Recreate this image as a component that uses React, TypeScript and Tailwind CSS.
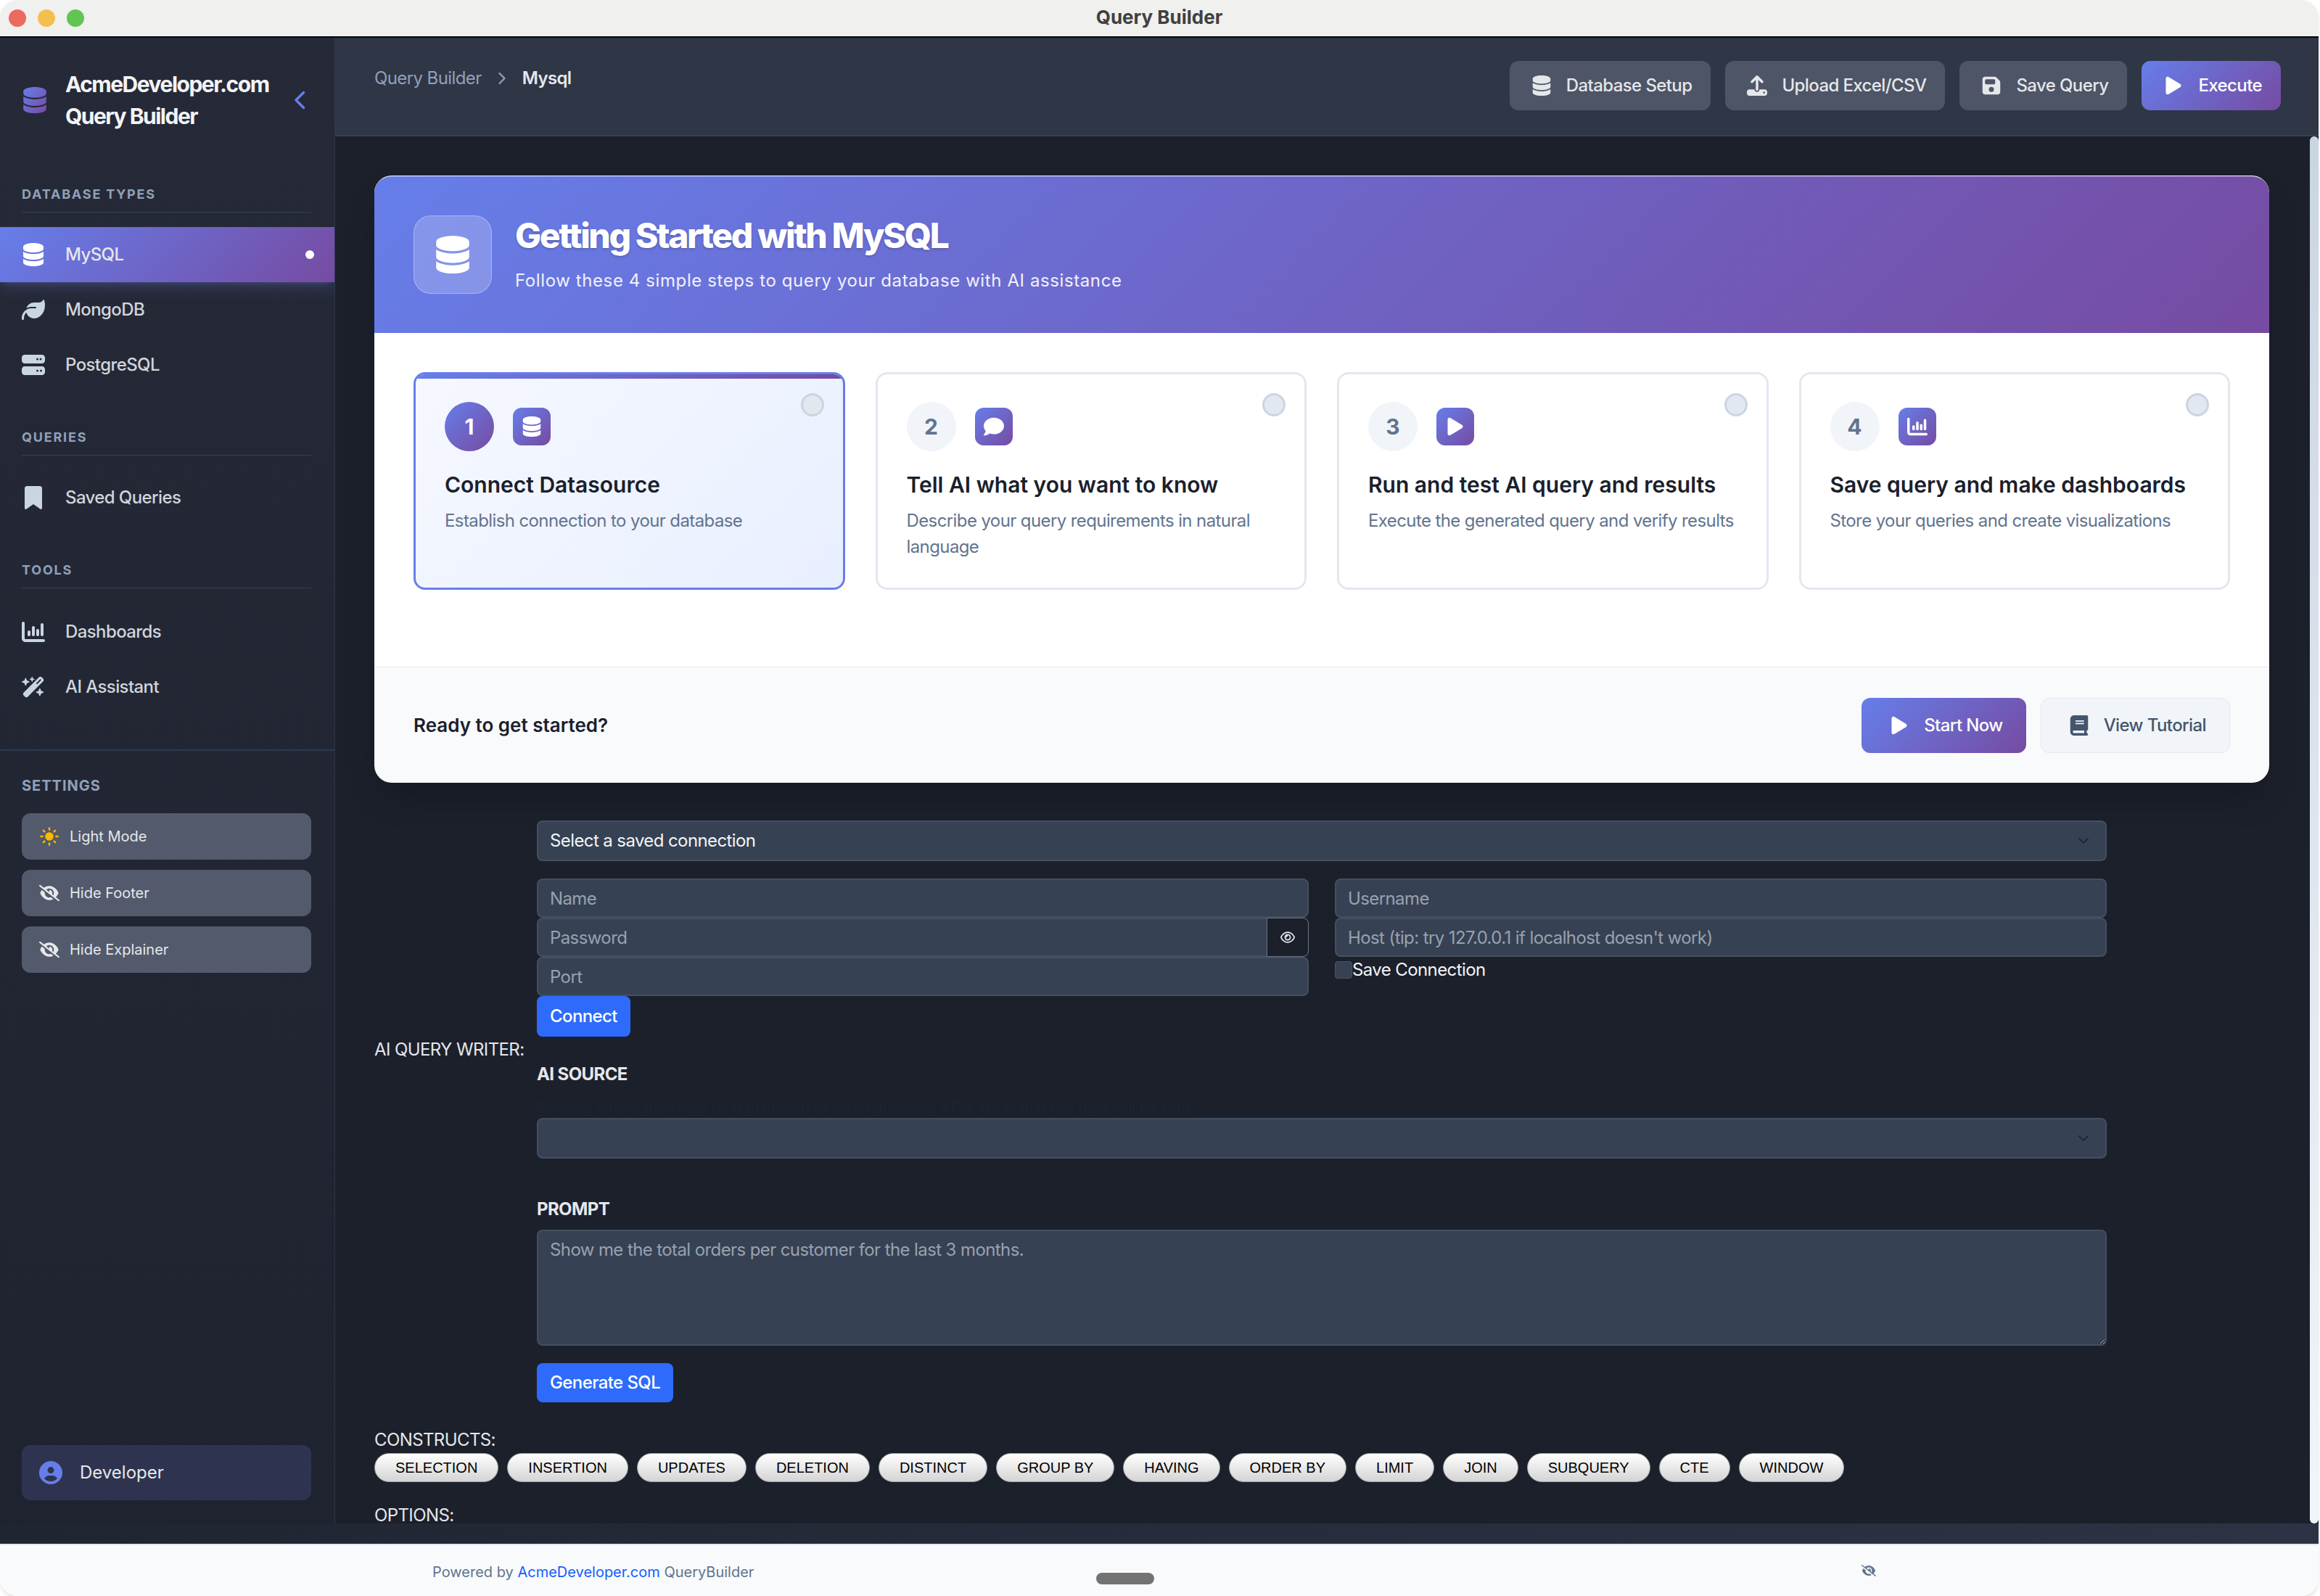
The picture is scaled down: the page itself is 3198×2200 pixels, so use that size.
import React from 'react';
import { ChevronDown, ChevronRight, Sun } from 'lucide-react';
import {
  FaBook,
  FaBookmark,
  FaChartColumn,
  FaChevronLeft,
  FaCircleUser,
  FaComment,
  FaDatabase,
  FaEyeSlash,
  FaFloppyDisk,
  FaLeaf,
  FaPlay,
  FaRegEye,
  FaServer,
  FaUpload,
  FaWandMagicSparkles,
} from 'react-icons/fa6';

const brand = 'bg-linear-135/srgb from-[#667eea] to-[#764ba2]';
const textMd = 'text-2xl tracking-tight';
const fieldClass = `h-13.5 w-full rounded-lg border-2 border-gray-600/70 bg-gray-700 px-4 ${textMd} text-gray-100 placeholder-gray-400 outline-none`;
const blueButton = `w-fit rounded-lg bg-[#2f6bfa] px-4.5 ${textMd} font-medium text-white`;
const labelClass = `${textMd} leading-7 text-gray-200`;

const databases = [
  { name: 'MySQL', icon: FaDatabase, active: true },
  { name: 'MongoDB', icon: FaLeaf },
  { name: 'PostgreSQL', icon: FaServer },
];

const steps = [
  { title: 'Connect Datasource', text: 'Establish connection to your database', icon: FaDatabase },
  { title: 'Tell AI what you want to know', text: 'Describe your query requirements in natural language', icon: FaComment },
  { title: 'Run and test AI query and results', text: 'Execute the generated query and verify results', icon: FaPlay },
  { title: 'Save query and make dashboards', text: 'Store your queries and create visualizations', icon: FaChartColumn },
];

const constructs = [
  'SELECTION',
  'INSERTION',
  'UPDATES',
  'DELETION',
  'DISTINCT',
  'GROUP BY',
  'HAVING',
  'ORDER BY',
  'LIMIT',
  'JOIN',
  'SUBQUERY',
  'CTE',
  'WINDOW',
];

const NavItem: React.FC<{
  name: string;
  icon: React.ElementType;
  active?: boolean;
}> = ({ name, icon: Icon, active }) => (
  <div
    className={`flex h-19 items-center gap-7 pl-7.5 pr-7 ${textMd} font-medium ${
      active ? `${brand} text-gray-200 shadow-lg shadow-indigo-400/20` : 'text-gray-300'
    }`}
  >
    <Icon className={active ? 'size-8 text-white' : 'size-8 text-slate-300'} />
    <span className="flex-1">{name}</span>
    {active && <span className="size-3 rounded-full bg-white" />}
  </div>
);

const SideLabel: React.FC<{ children: React.ReactNode }> = ({ children }) => (
  <div className="ml-7.5 mr-8 border-b border-slate-700 pb-2.5 text-lg leading-7 font-bold tracking-widest text-slate-400 uppercase">
    {children}
  </div>
);

const SettingButton: React.FC<{ label: string; icon: React.ReactNode }> = ({ label, icon }) => (
  <button className="flex h-16 items-center gap-3.5 rounded-xl bg-[#535a6b] pl-6 text-xl text-gray-200">
    {icon}
    {label}
  </button>
);

const Sidebar = () => (
  <aside className="flex w-[462px] shrink-0 flex-col border-r border-slate-700/60 bg-linear-to-b from-[#262a38] to-[#1f2330]">
    <div className="flex items-center pt-10.5 pl-7.5 pr-8">
      <FaDatabase className="mr-6 size-9 shrink-0" fill="url(#brandFill)" />
      <div className="flex-1 text-3xl leading-11 font-bold tracking-tighter text-gray-100">
        AcmeDeveloper.com
        <br />
        Query Builder
      </div>
      <FaChevronLeft className="size-7 text-[#667eea]" />
    </div>

    <div className="mt-18">
      <SideLabel>Database Types</SideLabel>
    </div>
    <div className="mt-5">
      {databases.map((db) => (
        <NavItem key={db.name} {...db} />
      ))}
    </div>

    <div className="mt-12">
      <SideLabel>Queries</SideLabel>
    </div>
    <div className="mt-5">
      <NavItem name="Saved Queries" icon={FaBookmark} />
    </div>

    <div className="mt-12">
      <SideLabel>Tools</SideLabel>
    </div>
    <div className="mt-5.5">
      <NavItem name="Dashboards" icon={FaChartColumn} />
      <NavItem name="AI Assistant" icon={FaWandMagicSparkles} />
    </div>

    <div className="mt-12 border-t-2 border-slate-700/70 pt-8.5 pl-7.5 pr-8">
      <div className="mb-6 text-xl leading-7 font-bold tracking-wider text-slate-400 uppercase">Settings</div>
      <div className="flex flex-col gap-3.5">
        <SettingButton
          label="Light Mode"
          icon={<Sun className="size-7 fill-amber-400 text-amber-400" />}
        />
        <SettingButton label="Hide Footer" icon={<FaEyeSlash className="size-7" />} />
        <SettingButton label="Hide Explainer" icon={<FaEyeSlash className="size-7" />} />
      </div>
    </div>

    <div className="mt-auto mb-8 ml-7.5 mr-8 flex h-19 items-center gap-6 rounded-xl bg-[#2e3450] pl-6 text-2xl text-gray-200">
      <FaCircleUser className="size-8 text-[#667eea]" />
      Developer
    </div>
  </aside>
);

const HeaderButton: React.FC<{
  label: string;
  icon: React.ElementType;
  primary?: boolean;
}> = ({ label, icon: Icon, primary }) => (
  <button
    className={`flex h-17 items-center gap-5 rounded-xl pl-7.5 pr-6.5 ${textMd} font-medium ${
      primary ? `${brand} text-white` : 'bg-[#4d5566] text-gray-200'
    }`}
  >
    <Icon className="size-7" />
    {label}
  </button>
);

const Header = () => (
  <header className="flex h-34 shrink-0 items-start justify-between border-b-2 border-slate-700 bg-[#2f3646] pt-8 pr-13 pl-13.5">
    <div className={`mt-2 flex items-center gap-3.5 ${textMd} leading-8`}>
      <span className="text-slate-400">Query Builder</span>
      <ChevronRight className="size-7 text-slate-400" />
      <span className="font-semibold text-gray-200">Mysql</span>
    </div>
    <div className="flex gap-5">
      <HeaderButton label="Database Setup" icon={FaDatabase} />
      <HeaderButton label="Upload Excel/CSV" icon={FaUpload} />
      <HeaderButton label="Save Query" icon={FaFloppyDisk} />
      <HeaderButton label="Execute" icon={FaPlay} primary />
    </div>
  </header>
);

const StepCard: React.FC<{
  index: number;
  title: string;
  text: string;
  icon: React.ElementType;
}> = ({ index, title, text, icon: Icon }) => {
  const active = index === 1;
  return (
    <div
      className={`relative h-75 overflow-hidden rounded-2xl border-3 px-10 pt-9.5 ${
        active ? 'border-[#667eea] bg-linear-135/srgb from-[#f6f8ff] to-[#e8efff]' : 'border-slate-200 bg-white'
      }`}
    >
      {active && <div className={`absolute inset-x-0 top-0 h-1.5 ${brand}`} />}
      <div className="absolute top-6.5 right-6.5 size-8 rounded-full border-3 border-slate-300 bg-slate-200" />
      <div className="flex items-center gap-6.5">
        <div
          className={`flex size-17 items-center justify-center rounded-full text-3xl font-bold ${
            active ? `${brand} text-white` : 'bg-slate-100 text-slate-500'
          }`}
        >
          {index}
        </div>
        <div className={`flex size-13 items-center justify-center rounded-xl text-white ${brand}`}>
          <Icon className="size-7" />
        </div>
      </div>
      <h3 className="mt-6.5 text-3xl leading-10 font-semibold text-[#1a202c]">{title}</h3>
      <p className={`mt-3 ${textMd} leading-9 text-slate-500`}>{text}</p>
    </div>
  );
};

const GettingStarted = () => (
  <section className="overflow-hidden rounded-3xl border-t border-white bg-[#f8fafc] shadow-2xl">
    <div className={`flex h-54 items-center gap-8 px-13.5 ${brand}`}>
      <div className="flex size-27 items-center justify-center rounded-3xl border border-white/30 bg-white/20">
        <FaDatabase className="size-13 text-white" />
      </div>
      <div>
        <h1 className="text-5xl leading-14 font-extrabold tracking-tighter text-white text-shadow-md">
          Getting Started with MySQL
        </h1>
        <p className="mt-4 text-2xl leading-9 tracking-wide text-white/90">
          Follow these 4 simple steps to query your database with AI assistance
        </p>
      </div>
    </div>

    <div className="grid grid-cols-4 gap-10.5 bg-white px-13.5 pt-13.5 pb-26.5">
      {steps.map((step, i) => (
        <StepCard key={step.title} index={i + 1} {...step} />
      ))}
    </div>

    <div className="flex h-40 items-center justify-between border-t border-slate-200 px-13.5">
      <span className="text-[26px] font-semibold text-[#1a202c]">Ready to get started?</span>
      <div className="flex gap-5">
        <button className={`flex h-19 items-center gap-5 rounded-xl pl-9.5 pr-8 ${textMd} font-medium text-white ${brand}`}>
          <FaPlay className="size-7" />
          Start Now
        </button>
        <button className={`flex h-19 items-center gap-5 rounded-xl border border-slate-200 bg-slate-100 pl-9.5 pr-8 ${textMd} font-medium text-slate-600`}>
          <FaBook className="size-7" />
          View Tutorial
        </button>
      </div>
    </div>
  </section>
);

const SelectField: React.FC<{ children?: React.ReactNode }> = ({ children }) => (
  <div className="relative">
    <select
      className={`h-14 w-full appearance-none rounded-lg border-2 border-gray-600/70 bg-gray-700 px-4 ${textMd} text-gray-100 outline-none`}
      defaultValue=""
    >
      {children}
    </select>
    <ChevronDown className="pointer-events-none absolute top-4 right-5 size-6 text-gray-800" />
  </div>
);

const ConnectionForm = () => (
  <div className="mt-13 px-56">
    <SelectField>
      <option value="">Select a saved connection</option>
    </SelectField>
    <div className="mt-6 grid grid-cols-2 gap-9">
      <div>
        <input className={fieldClass} placeholder="Name" />
        <div className="relative">
          <input className={fieldClass} placeholder="Password" />
          <button className="absolute inset-y-0 right-0 flex w-14.5 items-center justify-center rounded-r-lg border border-gray-500 bg-[#1c202b] text-gray-200">
            <FaRegEye className="size-5" />
          </button>
        </div>
        <input className={fieldClass} placeholder="Port" />
        <button className={`h-14 ${blueButton}`}>Connect</button>
      </div>
      <div>
        <input className={fieldClass} placeholder="Username" />
        <input className={fieldClass} placeholder="Host (tip: try 127.0.0.1 if localhost doesn't work)" />
        <label className={`flex h-9 items-center ${textMd} text-gray-100`}>
          <span className="size-6 rounded-sm border border-gray-600 bg-gray-700" />
          Save Connection
        </label>
      </div>
    </div>
  </div>
);

const QueryWriter = () => (
  <div className="flex">
    <div className={`mt-1 w-56 ${labelClass}`}>AI QUERY WRITER:</div>
    <div className="mr-56 flex-1">
      <div className={`mt-9.5 ${textMd} leading-7 font-bold text-gray-200`}>AI SOURCE</div>
      <p className="mt-4.5 text-xl leading-7 text-gray-800/50">
        Schema information may be transmitted to external openai APIs. No actual row data will be sent
      </p>
      <SelectField />
      <div className={`mt-14 ${textMd} leading-7 font-bold text-gray-200`}>PROMPT</div>
      <textarea
        className={`mt-3.5 block h-40 w-full rounded-lg border-2 border-gray-600/70 bg-gray-700 px-4 py-2.5 ${textMd} text-gray-100 placeholder-gray-400 outline-none`}
        placeholder="Show me the total orders per customer for the last 3 months."
      />
      <button className={`mt-6 h-13.5 ${blueButton}`}>Generate SQL</button>
    </div>
  </div>
);

const Constructs = () => (
  <div>
    <div className={`mt-9.5 ${labelClass}`}>CONSTRUCTS:</div>
    <div className="mt-1 flex gap-3">
      {constructs.map((item) => (
        <button
          key={item}
          className="h-10 rounded-full border border-neutral-400 bg-linear-to-b from-white to-neutral-300 px-7 font-['Liberation_Sans',Arial,sans-serif] text-xl text-black"
        >
          {item}
        </button>
      ))}
    </div>
    <div className={`mt-9 ${textMd} leading-5 text-gray-200`}>OPTIONS:</div>
  </div>
);

const App = () => (
  <div className="h-screen bg-white pr-0.5 font-['Inter','Liberation_Sans',sans-serif]">
    {/* gradient fill used by the sidebar logo */}
    <svg className="absolute size-0">
      <defs>
        <linearGradient id="brandFill" x1="0" y1="0" x2="1" y2="1">
          <stop offset="0" stopColor="#667eea" />
          <stop offset="1" stopColor="#764ba2" />
        </linearGradient>
      </defs>
    </svg>

    <div className="flex h-full flex-col overflow-hidden rounded-3xl shadow-md">
      <div className="relative flex h-13 shrink-0 items-center justify-center border-b-2 border-gray-950 bg-[#f0f0ee]">
        <div className="absolute left-3 flex gap-4">
          <span className="size-6 rounded-full bg-[#ed6a5f]" />
          <span className="size-6 rounded-full bg-[#f5bf4f]" />
          <span className="size-6 rounded-full bg-[#61c554]" />
        </div>
        <span className="-mt-1 text-[26px] font-bold text-neutral-700">Query Builder</span>
      </div>

      <div className="flex min-h-0 flex-1">
        <Sidebar />
        <main className="flex min-w-0 flex-1 flex-col">
          <Header />
          <div className="relative min-h-0 flex-1 overflow-hidden bg-[#1c202b] pt-13.5 pr-17 pl-13.5">
            <GettingStarted />
            <ConnectionForm />
            <QueryWriter />
            <Constructs />
            <div className="absolute inset-y-0 right-0 w-3 rounded-full bg-linear-to-b from-slate-300 to-slate-100" />
          </div>
        </main>
      </div>

      <div className="h-7 shrink-0 bg-linear-to-r from-[#202532] to-[#2d3344]" />

      <footer className="relative flex h-18 shrink-0 items-center justify-between border-t-2 border-slate-200 bg-[#f8fafc] pr-[610px] pl-[596px] text-xl text-slate-500">
        <span className="mt-1">
          Powered by <span className="text-blue-600">AcmeDeveloper.com</span> QueryBuilder
        </span>
        <FaEyeSlash className="size-5 text-slate-500" />
        <span className="absolute bottom-4 left-[1511px] h-4 w-20 rounded-full bg-neutral-500" />
      </footer>
    </div>
  </div>
);

export default App;
